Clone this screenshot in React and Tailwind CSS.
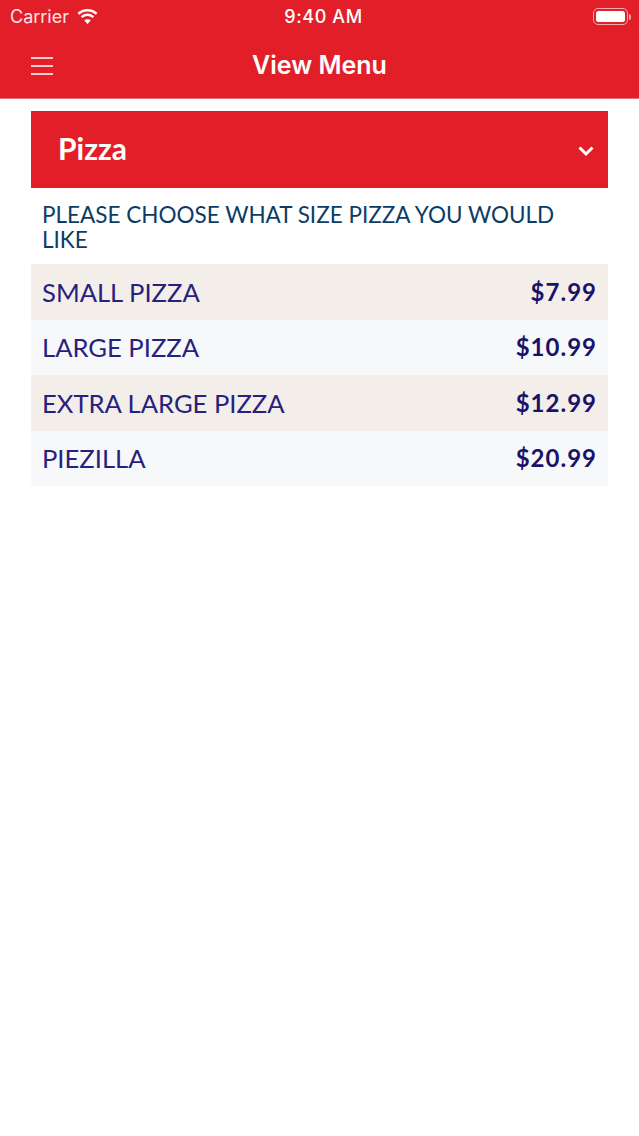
import React from 'react'

const items = [
  { name: 'SMALL PIZZA', price: '$7.99' },
  { name: 'LARGE PIZZA', price: '$10.99' },
  { name: 'EXTRA LARGE PIZZA', price: '$12.99' },
  { name: 'PIEZILLA', price: '$20.99' },
]

function Wifi() {
  return (
    <svg width="23" height="17" viewBox="0 0 23 17" fill="white">
      <path d="M11.5 3.4c3.2 0 6.1 1.2 8.3 3.3l1.7-1.8C18.9 2.400 15.400 .9 11.500 .9S4.100 2.400 1.500 4.900l1.700 1.800c2.200-2.100 5.100-3.300 8.300-3.300z" />
      <path d="M11.500 8c1.900 0 3.700.7 5 2l1.800-1.800c-1.800-1.700-4.200-2.800-6.800-2.800s-5 1.100-6.800 2.800L6.500 10c1.300-1.300 3.100-2 5-2z" />
      <path d="M11.500 11.300c-1.300 0-2.400.5-3.200 1.300l3.200 3.400 3.200-3.400c-.8-.8-1.900-1.300-3.200-1.300z" />
    </svg>
  )
}

function Battery() {
  return (
    <div className="flex items-center gap-[1px]">
      <div className="w-[35px] h-[17px] rounded-[5px] border border-[#f2a9ad] p-[2px]">
        <div className="w-full h-full rounded-[2.500px] bg-white" />
      </div>
      <div className="w-[2px] h-[6px] rounded-r-sm bg-[#f2a9ad]" />
    </div>
  )
}

export default function App() {
  return (
    <div className="w-[639px] h-[1136px] bg-white font-['Inter','Liberation_Sans',sans-serif]">
      <header className="h-[99px] bg-[#e21f29] border-b border-[#ee6f76] text-white">
        <div className="h-[33px] pl-[10px] pr-[8px] flex items-center justify-between relative">
          <div className="flex items-center gap-[7px]">
            <span className="text-[18px] text-[#fbe3e4]">Carrier</span>
            <Wifi />
          </div>
          <span className="absolute left-[8px] right-0 text-center text-[18px] font-medium tracking-[0.6px]">9:40 AM</span>
          <Battery />
        </div>
        <div className="h-[65px] flex items-center pl-[31px] relative">
          <div className="flex flex-col gap-[6px] w-[22px]">
            <div className="h-[2px] bg-[#f9c9cc]" />
            <div className="h-[2px] bg-[#f9c9cc]" />
            <div className="h-[2px] bg-[#f9c9cc]" />
          </div>
          <h1 className="absolute left-0 right-0 text-center text-[25px] font-semibold">View Menu</h1>
        </div>
      </header>

      <main className="px-[31px] pt-[12px] font-['Lato','Open_Sans',sans-serif]">
        <div className="h-[77px] bg-[#e21f29] pl-[27px] pr-[13px] flex items-center justify-between">
          <span className="text-[30px] font-bold text-white pb-[2px]">Pizza</span>
          <svg width="18" height="18" viewBox="0 0 18 18" fill="none" stroke="white" strokeWidth="3" className="mt-[2px]">
            <path d="M2.500 5.500L9 12l6.500-6.500" />
          </svg>
        </div>
        <p className="pt-[14px] pb-[12px] px-[11px] text-[22.500px] leading-[25px] text-[#0c3c66]">
          PLEASE CHOOSE WHAT SIZE PIZZA YOU WOULD LIKE
        </p>
        <ul>
          {items.map((item, index) => (
            <li
              key={index}
              className={`h-[55.500px] pl-[11px] pr-[11px] flex items-center justify-between ${index % 2 == 0 ? 'bg-[#f3eeea]' : 'bg-[#f7f8fa]'}`}
            >
              <span className="text-[25.600px] text-[#27217d]">{item.name}</span>
              <span className="text-[24px] font-bold tracking-[1px] text-[#1a1268]">{item.price}</span>
            </li>
          ))}
        </ul>
      </main>
    </div>
  )
}
